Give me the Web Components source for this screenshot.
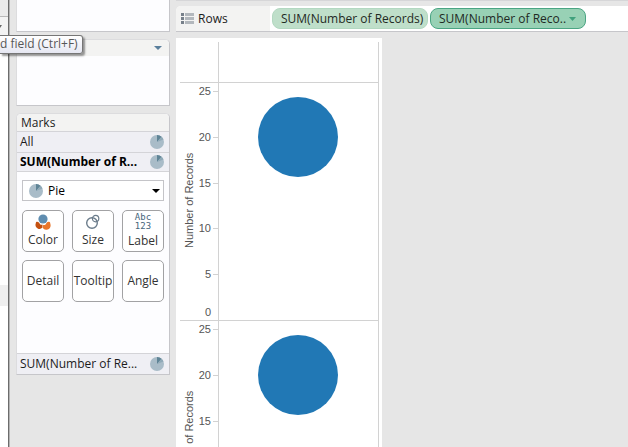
<!DOCTYPE html>
<html lang="en">
<head>
<meta charset="utf-8">
<title>Worksheet</title>
<style>
  body {
    margin: 0;
    height: 100vh;
    overflow: hidden;
    background: #e6e6e6;
    color: #1c1c1c;
    font: 12px/16px "Open Sans", "Noto Sans", sans-serif;
    --line: #d4d4d8;
    --shade: #c6c6ca;
    --paper: #fdfdff;
    --head: #f3f3f2;
  }
</style>
</head>
<body>
<work-sheet></work-sheet>

<script>
const define = (name, html, setup) => {
  const template = document.createElement("template");
  template.innerHTML = html;

  customElements.define(name, class extends HTMLElement {
    constructor() {
      super();
      this._root = this.attachShadow({ mode: "open" });
      this._root.appendChild(template.content.cloneNode(true));
    }

    connectedCallback() {
      if (setup) {
        setup(this, this._root);
      }
    }
  });
};

/* Icons */

define("pie-icon", `
  <style>
    :host { display: block; width: 14px; height: 14px; }
    svg { display: block; }
  </style>
  <svg width="14" height="14" viewBox="0 0 14 14" aria-hidden="true">
    <circle cx="7" cy="7" r="7" fill="#a9bcc8"/>
    <path d="M7 7V0A7 7 0 0 1 11.6 1.7Z" fill="#5f8496"/>
    <path d="M7 7L11.6 1.7A7 7 0 0 1 13.4 4.4Z" fill="#8fa9b7"/>
  </svg>
`);

/* A card in the side bar */

define("side-card", `
  <style>
    :host {
      display: block;
      box-sizing: border-box;
      background: var(--paper);
      border: 1px solid #dcdcde;
      border-right-color: var(--shade);
      border-bottom-color: var(--shade);
      border-radius: 5px 5px 0 0;
      overflow: hidden;
    }
    :host([plain]) { border-top: 0; border-radius: 0; }
  </style>
  <slot></slot>
`);

/* One layer of the marks card */

define("mark-layer", `
  <style>
    :host {
      display: flex;
      align-items: center;
      justify-content: space-between;
      box-sizing: border-box;
      height: 21px;
      padding: 0 5px 0 3px;
      background: #efeff4;
      border-top: 1px solid var(--line);
      white-space: nowrap;
    }
    :host([selected]) {
      height: 20px;
      border-bottom: 1px solid var(--line);
      color: #000;
      font-weight: bold;
    }
  </style>
  <span><slot></slot></span>
  <pie-icon></pie-icon>
`);

define("mark-button", `
  <style>
    :host { display: block; }
    button {
      display: flex;
      flex-direction: column;
      align-items: center;
      justify-content: center;
      gap: 2px;
      box-sizing: border-box;
      width: 100%;
      height: 42px;
      padding: 0;
      background: #fff;
      border: 1px solid #a2a2a4;
      border-radius: 5px;
      color: #333;
      font: inherit;
      white-space: nowrap;
    }
    ::slotted(svg) { display: block; }
  </style>
  <button type="button"><slot name="icon"></slot><span><slot></slot></span></button>
`);

define("marks-card", `
  <style>
    :host { display: block; }
    h2 {
      margin: 0;
      padding: 1px 4px 0;
      background: var(--head);
      font: inherit;
    }
    .body {
      display: flex;
      flex-direction: column;
      gap: 9px;
      padding: 8px 5px 51px;
    }
    .type { display: flex; align-items: center; position: relative; }
    select {
      flex: 1;
      height: 21px;
      padding: 0 20px 0 25px;
      appearance: none;
      background: #fff;
      border: 1px solid #c4c4c8;
      border-radius: 0;
      color: #000;
      font: inherit;
    }
    /* icon and arrow lie over the select */
    .type pie-icon, .type svg { position: absolute; pointer-events: none; }
    .type pie-icon { left: 7px; }
    .type svg { right: 4px; }
    .grid {
      display: grid;
      grid-template-columns: repeat(3, 1fr);
      gap: 8px;
    }
    .abc {
      display: flex;
      flex-direction: column;
      align-items: center;
      color: #47657b;
      font: 9px/9px "DejaVu Sans Mono", monospace;
    }
  </style>
  <side-card>
    <h2>Marks</h2>
    <mark-layer>All</mark-layer>
    <mark-layer selected>SUM(Number of R...</mark-layer>
    <div class="body">
      <div class="type">
        <select aria-label="Mark type"><option>Pie</option></select>
        <pie-icon></pie-icon>
        <svg width="8" height="4" viewBox="0 0 8 4" aria-hidden="true"><path d="M0 0H8L4 4Z" fill="#000"/></svg>
      </div>
      <div class="grid">
        <mark-button>
          <svg slot="icon" width="16" height="16" viewBox="0 0 16 16" aria-hidden="true">
            <path d="M1 8.2C3 7 4.3 9 5 10.2C5.8 11 7 11 7.6 10.6L7.4 13.6A4 4 0 0 1 0.4 11Z" fill="#c4500f"/>
            <path d="M15 8.2C12 6.8 11.7 9.4 10.6 10.4C9.8 11.2 8.8 11.2 8.2 11L7.6 13.8A4.4 4.4 0 0 0 15.6 11Z" fill="#e9762b"/>
            <circle cx="8" cy="5" r="4.6" fill="#5f8db0"/>
          </svg>Color
        </mark-button>
        <mark-button>
          <svg slot="icon" width="16" height="16" viewBox="0 0 16 16" aria-hidden="true" fill="none" stroke="#6b7c8b">
            <circle cx="7" cy="9" r="5.3" stroke-width="1.4"/>
            <circle cx="10.6" cy="4.6" r="3.2" stroke-width="1.2"/>
          </svg>Size
        </mark-button>
        <mark-button>
          <span slot="icon" class="abc"><span>Abc</span><span>123</span></span>Label
        </mark-button>
        <mark-button>Detail</mark-button>
        <mark-button>Tooltip</mark-button>
        <mark-button>Angle</mark-button>
      </div>
    </div>
    <mark-layer>SUM(Number of Re...</mark-layer>
  </side-card>
`);

/* Rows shelf and its pills */

define("field-pill", `
  <style>
    :host { display: block; }
    button {
      display: flex;
      align-items: center;
      gap: 3px;
      box-sizing: border-box;
      width: 156px;
      height: 21px;
      padding: 0 0 0 8px;
      background: #bfdfca;
      border: 1px solid #b3d8c1;
      border-radius: 8px;
      color: #1f2a24;
      font: inherit;
      white-space: nowrap;
    }
    svg { display: none; flex: none; }
    :host([active]) button { background: #98d1b5; border-color: #4ba583; }
    :host([active]) svg { display: block; }
  </style>
  <button type="button">
    <slot></slot>
    <svg width="7" height="4" viewBox="0 0 7 4" aria-hidden="true"><path d="M0 0H7L3.5 4Z" fill="#3fa07c"/></svg>
  </button>
`);

define("rows-shelf", `
  <style>
    :host {
      display: flex;
      box-sizing: border-box;
      height: 26px;
      background: #fff;
      border-bottom: 1px solid var(--shade);
      border-radius: 5px 0 0 0;
      overflow: hidden;
    }
    .label {
      display: flex;
      align-items: center;
      gap: 4px;
      box-sizing: border-box;
      width: 94px;
      padding-left: 5px;
      background: var(--head);
    }
    .pills {
      display: flex;
      align-items: center;
      gap: 2px;
      padding-left: 2px;
    }
  </style>
  <div class="label">
    <svg width="13" height="11" viewBox="0 0 13 11" aria-hidden="true">
      <path d="M0 0h3v3H0zM0 4h3v3H0zM0 8h3v3H0z" fill="#77808a"/>
      <path d="M4 0h9v3H4zM4 4h9v3H4zM4 8h9v3H4z" fill="#b3b8bd"/>
    </svg>
    <span>Rows</span>
  </div>
  <div class="pills"><slot></slot></div>
`);

/* One pane of the chart: axis, ticks and the pie mark */

define("chart-pane", `
  <style>
    :host { display: block; border-top: 1px solid #d2d2d2; }
    svg { display: block; }
    text { fill: #555; font: 11px "Liberation Sans", Arial, sans-serif; }
    .rule { stroke: #d2d2d2; }
  </style>
  <svg width="199" height="237" role="img" aria-label="Number of Records, 20">
    <path class="rule" d="M38.5 0V237M198.5 0V237"/>
    <text transform="translate(13 165) rotate(-90)">Number of Records</text>
    <g class="ticks"></g>
    <circle cx="118" cy="54" r="40" fill="#2178b5"/>
  </svg>
`, (host, root) => {
  const ticks = [[25, 8], [20, 54], [15, 100], [10, 145], [5, 191], [0, 237]];
  root.querySelector(".ticks").innerHTML = ticks.map(([value, y]) => {
    // the zero label is lifted to stay inside the pane
    const base = value ? y + 4 : y - 4;
    return `<text x="31" y="${base}" text-anchor="end">${value}</text>
      <path class="rule" d="M33 ${y}.5H38"/>`;
  }).join("");
});

define("chart-view", `
  <style>
    :host {
      display: block;
      box-sizing: border-box;
      width: 206px;
      flex: 1;
      min-height: 0;
      padding: 4px 3px 0 4px;
      background: #fff;
      overflow: hidden;
    }
    .head { height: 40px; display: flex; justify-content: flex-end; }
    .head div {
      box-sizing: border-box;
      width: 161px;
      border: solid #d2d2d2;
      border-width: 0 1px;
    }
  </style>
  <div class="head"><div></div></div>
  <chart-pane></chart-pane>
  <chart-pane></chart-pane>
`);

/* Edge of the data pane */

define("data-edge", `
  <style>
    :host {
      display: flex;
      flex-direction: column;
      width: 8px;
      background: #fff;
      border-right: 1px solid #6c6c6c;
      box-shadow: 1px 0 #b4b4b4;
    }
    .top { height: 16px; background: #ebebeb; border-bottom: 1px solid #b9b9b9; }
    .bar { height: 37px; padding-top: 8px; box-sizing: border-box; background: #f3f3f3; }
    .row { height: 21px; margin-top: 231px; background: #efefef; }
    svg { display: block; }
  </style>
  <div class="top"></div>
  <div class="bar"><svg width="2" height="3" viewBox="0 0 2 3" aria-hidden="true"><path d="M0 0H2L0 3Z" fill="#666"/></svg></div>
  <div class="row"></div>
`);

define("tool-tip", `
  <style>
    :host {
      display: block;
      box-sizing: border-box;
      height: 19px;
      padding-right: 4px;
      background: linear-gradient(#fff, #e6e7f2);
      border: 1px solid #767676;
      border-left: 0;
      border-radius: 0 3px 3px 0;
      box-shadow: 2px 2px 2px rgba(0, 0, 0, .4);
      color: #575757;
      white-space: nowrap;
    }
  </style>
  <slot></slot>
`);

define("work-sheet", `
  <style>
    :host { display: flex; height: 100%; position: relative; }
    aside {
      display: flex;
      flex-direction: column;
      width: 154px;
      padding: 0 6px 0 7px;
    }
    .top { height: 32px; }
    .filters { height: 67px; margin: 7px 0; }
    .filters div {
      display: flex;
      align-items: center;
      justify-content: flex-end;
      height: 16px;
      padding-right: 7px;
      background: var(--head);
    }
    main {
      flex: 1;
      min-width: 0;
      display: flex;
      flex-direction: column;
      align-items: flex-start;
    }
    .above {
      align-self: stretch;
      height: 1px;
      margin-bottom: 5px;
      background: #d6d6d8;
    }
    rows-shelf { align-self: stretch; margin-bottom: 6px; }
    tool-tip { position: absolute; left: 0; top: 35px; }
  </style>
  <data-edge></data-edge>
  <aside>
    <side-card class="top" plain></side-card>
    <side-card class="filters">
      <div><svg width="8" height="4" viewBox="0 0 8 4" aria-hidden="true"><path d="M0 0H8L4 4Z" fill="#5a7f9c"/></svg></div>
    </side-card>
    <marks-card></marks-card>
  </aside>
  <main>
    <div class="above"></div>
    <rows-shelf>
      <field-pill>SUM(Number of Records)</field-pill>
      <field-pill active>SUM(Number of Reco..</field-pill>
    </rows-shelf>
    <chart-view></chart-view>
  </main>
  <tool-tip role="tooltip">d field (Ctrl+F)</tool-tip>
`);
</script>
</body>
</html>
